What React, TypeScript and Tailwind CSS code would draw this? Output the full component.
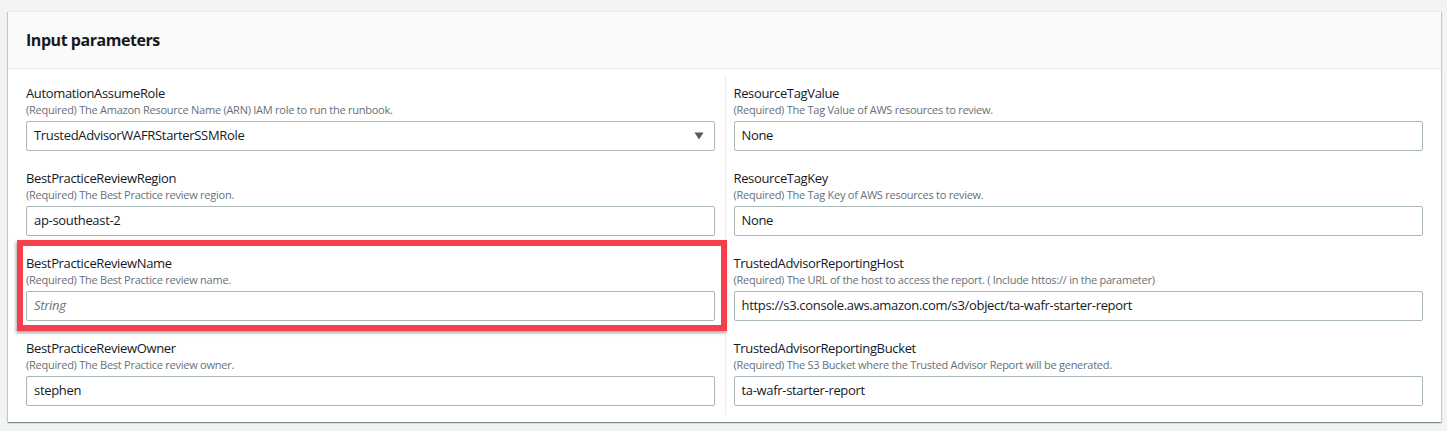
import React from "react";

type Field = {
  label: string;
  desc: string;
  value?: string;
  placeholder?: string;
  select?: boolean;
};

const left: Field[] = [
  {
    label: "AutomationAssumeRole",
    desc: "(Required) The Amazon Resource Name (ARN) IAM role to run the runbook.",
    value: "TrustedAdvisorWAFRStarterSSMRole",
    select: true,
  },
  {
    label: "BestPracticeReviewRegion",
    desc: "(Required) The Best Practice review region.",
    value: "ap-southeast-2",
  },
  {
    label: "BestPracticeReviewName",
    desc: "(Required) The Best Practice review name.",
    placeholder: "String",
  },
  {
    label: "BestPracticeReviewOwner",
    desc: "(Required) The Best Practice review owner.",
    value: "stephen",
  },
];

const right: Field[] = [
  {
    label: "ResourceTagValue",
    desc: "(Required) The Tag Value of AWS resources to review.",
    value: "None",
  },
  {
    label: "ResourceTagKey",
    desc: "(Required) The Tag Key of AWS resources to review.",
    value: "None",
  },
  {
    label: "TrustedAdvisorReportingHost",
    desc: "(Required) The URL of the host to access the report. ( Include httos:// in the parameter)",
    value: "https://s3.console.aws.amazon.com/s3/object/ta-wafr-starter-report",
  },
  {
    label: "TrustedAdvisorReportingBucket",
    desc: "(Required) The S3 Bucket where the Trusted Advisor Report will be generated.",
    value: "ta-wafr-starter-report",
  },
];

function FieldRow({ f, last }: { f: Field; last: boolean }) {
  return (
    <div className={last ? "" : "pb-[18px]"}>
      <div className="text-[13px] leading-[18px] tracking-[-0.35px] text-[#16191f]">{f.label}</div>
      <div className="text-[11px] leading-[16px] tracking-[-0.25px] text-[#687078]">{f.desc}</div>
      <div className="mt-[3px] h-[30px] border border-[#aab7b8] rounded-[2px] bg-white flex items-center pl-[7px] pr-[10px]">
        {f.placeholder ? (
          <span className="text-[13px] italic tracking-[-0.3px] text-[#687078]">{f.placeholder}</span>
        ) : (
          <span className="text-[13px] tracking-[-0.32px] text-[#16191f] flex-1">{f.value}</span>
        )}
        {f.select && (
          <svg width="10" height="8" viewBox="0 0 10 8" className="shrink-0">
            <path d="M0.5 0.5 L9.5 0.5 L5 7.5 Z" fill="#545b64" />
          </svg>
        )}
      </div>
    </div>
  );
}

export default function App() {
  return (
    <div
      className="w-[1447px] h-[431px] bg-[#f2f3f3] pt-[11px] pl-[8px] pr-[6px]"
      style={{ fontFamily: '"Open Sans", "Noto Sans", sans-serif' }}
    >
      <div className="relative bg-white w-[1433px] h-[411px] shadow-[0_1px_1px_0_rgba(0,28,36,0.3),1px_1px_1px_0_rgba(0,28,36,0.15),-1px_1px_1px_0_rgba(0,28,36,0.15)] border-t border-[#eaeded]">
        <div className="h-[57px] bg-[#fafafa] border-b border-[#eaeded] flex items-center px-[18px]">
          <h2 className="text-[16px] font-bold text-[#16191f] tracking-[-0.45px]">Input parameters</h2>
        </div>
        <div className="grid grid-cols-2 px-[18px] py-[6px]">
          <div className="pr-[10px] py-[9px]">
            {left.map((f, i) => (
              <FieldRow key={f.label} f={f} last={i === left.length - 1} />
            ))}
          </div>
          <div className="border-l border-[#eaeded] pl-[8px] py-[9px]">
            {right.map((f, i) => (
              <FieldRow key={f.label} f={f} last={i === right.length - 1} />
            ))}
          </div>
        </div>
        <div className="absolute left-[9px] top-[228px] w-[710px] h-[91px] border-[6px] border-[#f4404a] shadow-[-1px_2px_3px_rgba(0,0,0,0.35)]" />
      </div>
    </div>
  );
}
